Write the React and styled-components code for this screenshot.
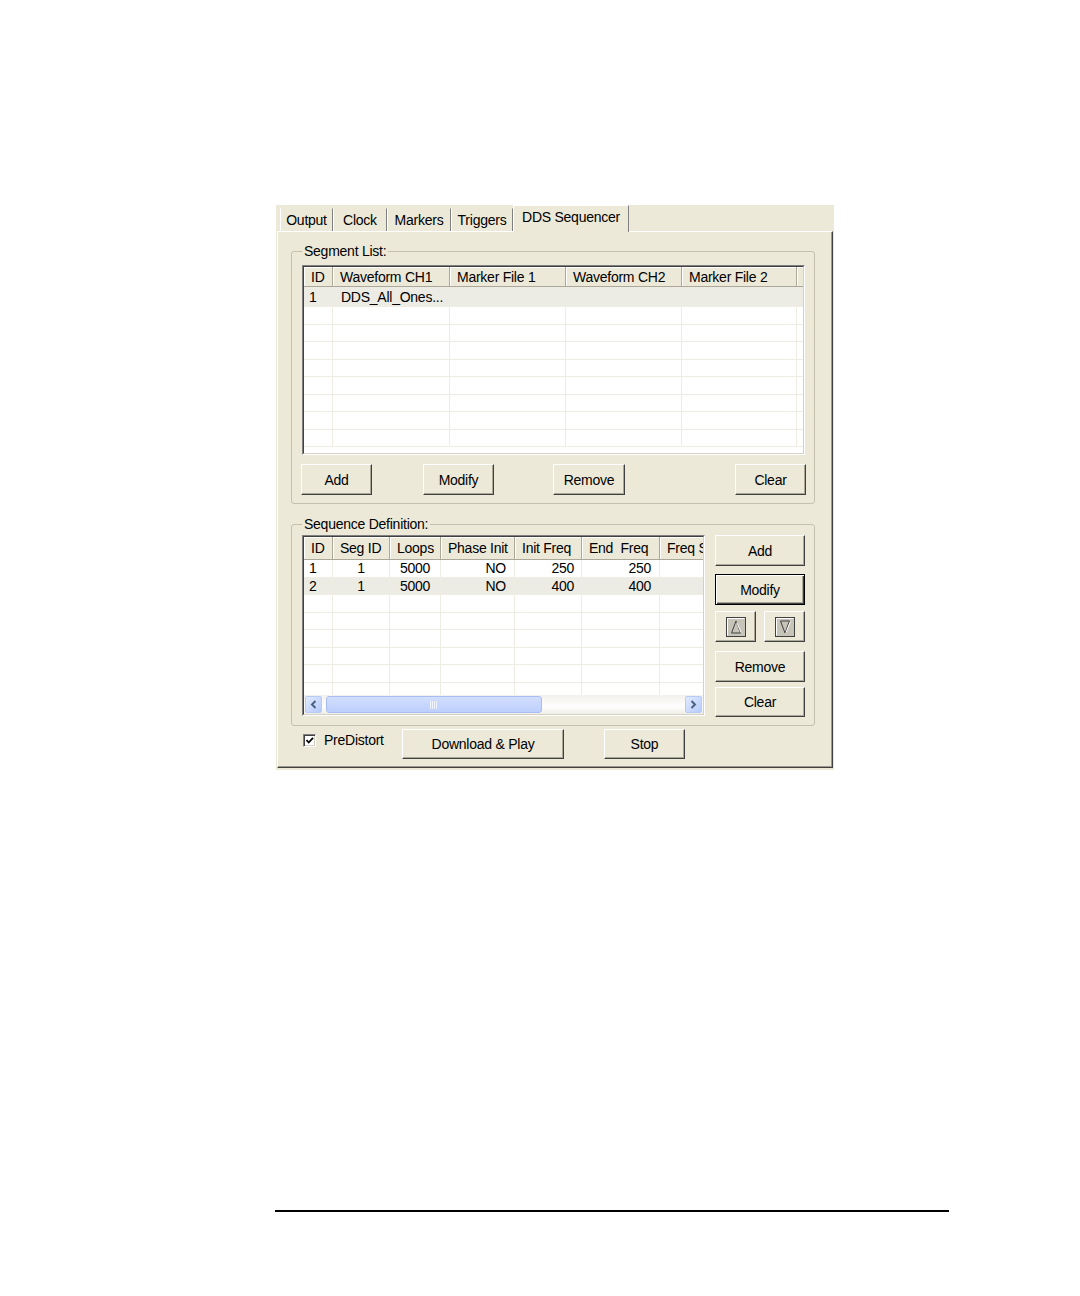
import React from 'react';
import styled, { createGlobalStyle, css } from 'styled-components';

const GlobalStyle = createGlobalStyle`
  body {
    margin: 0;
    background: #fff;
    font-family: "Liberation Sans", Arial, sans-serif;
    font-size: 14px;
    letter-spacing: -0.25px;
    color: #000;
  }
`;

const Page = styled.div`
  padding: 205px 0 40px 276px;
`;

const Window = styled.div`
  width: 558px;
  height: 565px;
  box-sizing: border-box;
  padding: 0 1px 2px 1px;
  background: #ece9d8;
  display: flex;
  flex-direction: column;
`;

const TabStrip = styled.div`
  height: 26px;
  flex: none;
  display: flex;
  align-items: flex-end;
  padding-left: 3px;
`;

const Tab = styled.div`
  box-sizing: border-box;
  width: ${(p) => p.$w}px;
  height: ${(p) => (p.$active ? 27 : 23)}px;
  margin-bottom: ${(p) => (p.$active ? -1 : 0)}px;
  padding-bottom: ${(p) => (p.$active ? 5 : 0)}px;
  display: flex;
  align-items: center;
  justify-content: center;
  border-left: 1px solid #fff;
  border-right: 1px solid #808080;
  border-top: 1px solid ${(p) => (p.$active ? '#fff' : 'transparent')};
  background: #ece9d8;
  position: relative;
  z-index: ${(p) => (p.$active ? 1 : 0)};
  white-space: nowrap;
`;

const Panel = styled.div`
  flex: 1;
  box-sizing: border-box;
  border: 1px solid;
  border-color: #fff #404040 #404040 #fff;
  box-shadow: inset -1px -1px 0 #9d9a8c;
  padding: 12px 17px 8px 13px;
  display: flex;
  flex-direction: column;
`;

const Group = styled.fieldset`
  margin: ${(p) => p.$mt || 0}px 0 0;
  padding: ${(p) => p.$pt}px 9px 8px 10px;
  border: 1px solid #c3c0b0;
  border-radius: 3px;
  min-width: 0;
`;

const Legend = styled.legend`
  padding: 0 2px;
  line-height: 14px;
`;

const ListOuter = styled.div`
  box-sizing: border-box;
  flex: none;
  width: ${(p) => p.$w}px;
  height: ${(p) => p.$h}px;
  border: 1px solid;
  border-color: #808080 #fff #fff #808080;
`;

const ListInner = styled.div`
  height: 100%;
  box-sizing: border-box;
  border: 1px solid;
  border-color: #404040 #d4d0c8 #d4d0c8 #404040;
  background: #fff;
  display: flex;
  flex-direction: column;
  overflow: hidden;
`;

const HeaderRow = styled.div`
  display: flex;
  flex: none;
  height: ${(p) => p.$h}px;
  background: #ece9d8;
`;

const HeadCell = styled.div`
  box-sizing: border-box;
  flex: none;
  width: ${(p) => p.$w}px;
  padding-left: ${(p) => p.$pl || 7}px;
  display: flex;
  align-items: center;
  border-right: 1px solid #aca899;
  border-bottom: 1px solid #aca899;
  box-shadow: inset 1px 1px 0 #fff;
  white-space: pre;
  overflow: hidden;
`;

const HeadFill = styled.div`
  flex: 1;
  min-width: 0;
  border-bottom: 1px solid #aca899;
  box-shadow: inset 1px 1px 0 #fff;
`;

const Body = styled.div`
  flex: 1;
  overflow: hidden;
`;

const Row = styled.div`
  display: flex;
  box-sizing: border-box;
  height: ${(p) => p.$h}px;
  background: ${(p) => (p.$sel ? '#ecebe4' : '#fff')};
  border-bottom: 1px solid #efede3;
`;

const Cell = styled.div`
  box-sizing: border-box;
  flex: none;
  width: ${(p) => p.$w}px;
  border-right: 1px solid #efede3;
  padding: 0 ${(p) => (p.$align === 'right' ? p.$pad : 0)}px 0
    ${(p) => (p.$align === 'left' ? p.$pad : 0)}px;
  display: flex;
  align-items: center;
  justify-content: ${(p) =>
    p.$align === 'right' ? 'flex-end' : p.$align === 'center' ? 'center' : 'flex-start'};
  white-space: nowrap;
  overflow: hidden;
`;

const HScroll = styled.div`
  flex: none;
  height: 19px;
  display: flex;
  align-items: center;
  padding: 0 1px;
  background: linear-gradient(#f3f1ec, #fefefe 60%, #f0eee6);
`;

const ScrollBtn = styled.div`
  flex: none;
  width: 17px;
  height: 17px;
  box-sizing: border-box;
  border-radius: 2px;
  border: 1px solid #b7cbf5;
  background: linear-gradient(135deg, #e1eafe, #b6cbfa);
  display: flex;
  align-items: center;
  justify-content: center;
`;

const Thumb = styled.div`
  flex: none;
  width: 216px;
  height: 17px;
  margin-left: 4px;
  box-sizing: border-box;
  border: 1px solid #a9bdf0;
  border-radius: 3px;
  background: linear-gradient(#d2defd, #bccffb);
  display: flex;
  align-items: center;
  justify-content: center;
`;

const Track = styled.div`
  flex: 1;
`;

const ButtonRow = styled.div`
  display: flex;
  margin: 9px -1px 0 -1px;
`;

const Button = styled.button`
  box-sizing: border-box;
  flex: none;
  width: ${(p) => p.$w}px;
  height: ${(p) => p.$h || 31}px;
  margin: ${(p) => p.$mt || 0}px 0 0 ${(p) => (p.$push ? 'auto' : `${p.$ml || 0}px`)};
  padding: 0;
  font: inherit;
  letter-spacing: inherit;
  color: #000;
  background: #ece9d8;
  border: 1px solid;
  border-color: #fff #404040 #404040 #fff;
  box-shadow: inset -1px -1px 0 #aca899;
  display: flex;
  align-items: center;
  justify-content: center;
  ${(p) =>
    p.$default &&
    css`
      border-color: #000;
      box-shadow: inset 1px 1px 0 #fff, inset -1px -1px 0 #404040, inset -2px -2px 0 #aca899;
    `}
`;

const SeqBody = styled.div`
  display: flex;
  gap: 10px;
`;

const SideButtons = styled.div`
  width: 90px;
  display: flex;
  flex-direction: column;
`;

const ArrowPair = styled.div`
  display: flex;
  justify-content: space-between;
  margin-top: 6px;
`;

const BottomRow = styled.div`
  display: flex;
  height: 30px;
  margin-top: 3px;
`;

const CheckArea = styled.label`
  box-sizing: border-box;
  width: 111px;
  height: 24px;
  margin-top: -1px;
  padding-left: 12px;
  display: flex;
  align-items: center;
  gap: 8px;
`;

const CheckBox = styled.span`
  box-sizing: border-box;
  flex: none;
  width: 13px;
  height: 13px;
  border: 1px solid;
  border-color: #808080 #fff #fff #808080;
  box-shadow: inset 1px 1px 0 #404040, inset -1px -1px 0 #d4d0c8;
  background: #fff;
  display: flex;
  align-items: center;
  justify-content: center;
`;

const Rule = styled.div`
  width: 674px;
  height: 2px;
  margin: 440px 0 0 -1px;
  background: #000;
`;

const Chevron = ({ dir }) => (
  <svg width="7" height="9" viewBox="0 0 7 9">
    <path
      d={dir === 'left' ? 'M5.5 1 L2 4.5 L5.5 8' : 'M1.5 1 L5 4.5 L1.5 8'}
      fill="none"
      stroke="#4d6185"
      strokeWidth="2"
    />
  </svg>
);

const Grip = () => (
  <svg width="8" height="8" viewBox="0 0 8 8">
    {[0.5, 2.5, 4.5, 6.5].map((x) => (
      <line key={x} x1={x} y1="0" x2={x} y2="8" stroke="#eef3fe" />
    ))}
  </svg>
);

const MoveIcon = ({ up }) => (
  <svg width="20" height="20" viewBox="0 0 20 20">
    <rect x="0.5" y="0.5" width="19" height="19" fill="#c6c3b9" stroke="#404040" />
    <path d="M1.5 18.5 V1.5 H18.5" fill="none" stroke="#fff" />
    {up ? (
      <>
        <path d="M10 4 L5.5 16 H14.5 Z" fill="none" stroke="#404040" />
        <path d="M10.8 5.5 L15 15.5" fill="none" stroke="#fff" />
      </>
    ) : (
      <>
        <path d="M5.5 4 H14.5 L10 16 Z" fill="none" stroke="#404040" />
        <path d="M15.5 4.5 L11 15.5" fill="none" stroke="#fff" />
      </>
    )}
  </svg>
);

const Check = () => (
  <svg width="9" height="9" viewBox="0 0 9 9">
    <path d="M1.5 4 L3.7 6.5 L8 1.8" fill="none" stroke="#000" strokeWidth="1.8" />
  </svg>
);

const segColumns = [
  { title: 'ID', w: 29, align: 'left', pad: 5 },
  { title: 'Waveform CH1', w: 117, align: 'left', pad: 8 },
  { title: 'Marker File 1', w: 116, align: 'left', pad: 7 },
  { title: 'Waveform CH2', w: 116, align: 'left', pad: 7 },
  { title: 'Marker File 2', w: 115, align: 'left', pad: 7 },
];

const segRows = [['1', 'DDS_All_Ones...', '', '', '']];

const seqColumns = [
  { title: 'ID', w: 29, align: 'left', pad: 5 },
  { title: 'Seg ID', w: 57, align: 'center' },
  { title: 'Loops', w: 51, align: 'center' },
  { title: 'Phase Init', w: 74, align: 'right', pad: 8 },
  { title: 'Init Freq', w: 67, align: 'right', pad: 7 },
  { title: 'End  Freq', w: 78, align: 'right', pad: 8 },
  { title: 'Freq Step', w: 80, align: 'right', pad: 8 },
];

const seqRows = [
  ['1', '1', '5000', 'NO', '250', '250', ''],
  ['2', '1', '5000', 'NO', '400', '400', ''],
];

const ListView = ({ width, height, headerHeight, columns, rows, rowCount, firstRow, selected, scroll }) => (
  <ListOuter $w={width} $h={height}>
    <ListInner>
      <HeaderRow $h={headerHeight}>
        {columns.map((c) => (
          <HeadCell key={c.title} $w={c.w}>
            {c.title}
          </HeadCell>
        ))}
        <HeadFill />
      </HeaderRow>
      <Body>
        {Array.from({ length: rowCount }).map((_, i) => (
          <Row key={i} $h={i === 0 && firstRow ? firstRow : 17.5} $sel={i === selected}>
            {columns.map((c, j) => (
              <Cell key={c.title} $w={c.w} $align={c.align} $pad={c.pad}>
                {rows[i] ? rows[i][j] : ''}
              </Cell>
            ))}
          </Row>
        ))}
      </Body>
      {scroll && (
        <HScroll>
          <ScrollBtn>
            <Chevron dir="left" />
          </ScrollBtn>
          <Thumb>
            <Grip />
          </Thumb>
          <Track />
          <ScrollBtn>
            <Chevron dir="right" />
          </ScrollBtn>
        </HScroll>
      )}
    </ListInner>
  </ListOuter>
);

const tabs = [
  { label: 'Output', w: 53 },
  { label: 'Clock', w: 54 },
  { label: 'Markers', w: 64 },
  { label: 'Triggers', w: 62 },
  { label: 'DDS Sequencer', w: 116, active: true },
];

export default function App() {
  return (
    <Page>
      <GlobalStyle />
      <Window>
        <TabStrip>
          {tabs.map((t) => (
            <Tab key={t.label} $w={t.w} $active={t.active}>
              {t.label}
            </Tab>
          ))}
        </TabStrip>
        <Panel>
          <Group $pt={7}>
            <Legend>Segment List:</Legend>
            <ListView
              width={503}
              height={190}
              headerHeight={20}
              columns={segColumns}
              rows={segRows}
              rowCount={9}
              firstRow={20}
              selected={0}
            />
            <ButtonRow>
              <Button $w={71}>Add</Button>
              <Button $w={71} $ml={51}>Modify</Button>
              <Button $w={72} $ml={59}>Remove</Button>
              <Button $w={71} $push>Clear</Button>
            </ButtonRow>
          </Group>
          <Group $pt={4} $mt={13}>
            <Legend>Sequence Definition:</Legend>
            <SeqBody>
              <ListView
                width={403}
                height={181}
                headerHeight={23}
                columns={seqColumns}
                rows={seqRows}
                rowCount={8}
                selected={1}
                scroll
              />
              <SideButtons>
                <Button $w={90}>Add</Button>
                <Button $w={90} $mt={8} $default>Modify</Button>
                <ArrowPair>
                  <Button $w={41}>
                    <MoveIcon up />
                  </Button>
                  <Button $w={41}>
                    <MoveIcon />
                  </Button>
                </ArrowPair>
                <Button $w={90} $mt={9}>Remove</Button>
                <Button $w={90} $h={30} $mt={5}>Clear</Button>
              </SideButtons>
            </SeqBody>
          </Group>
          <BottomRow>
            <CheckArea>
              <CheckBox>
                <Check />
              </CheckBox>
              PreDistort
            </CheckArea>
            <Button $w={162} $h={30}>Download &amp; Play</Button>
            <Button $w={81} $h={30} $ml={40}>Stop</Button>
          </BottomRow>
        </Panel>
      </Window>
      <Rule />
    </Page>
  );
}
